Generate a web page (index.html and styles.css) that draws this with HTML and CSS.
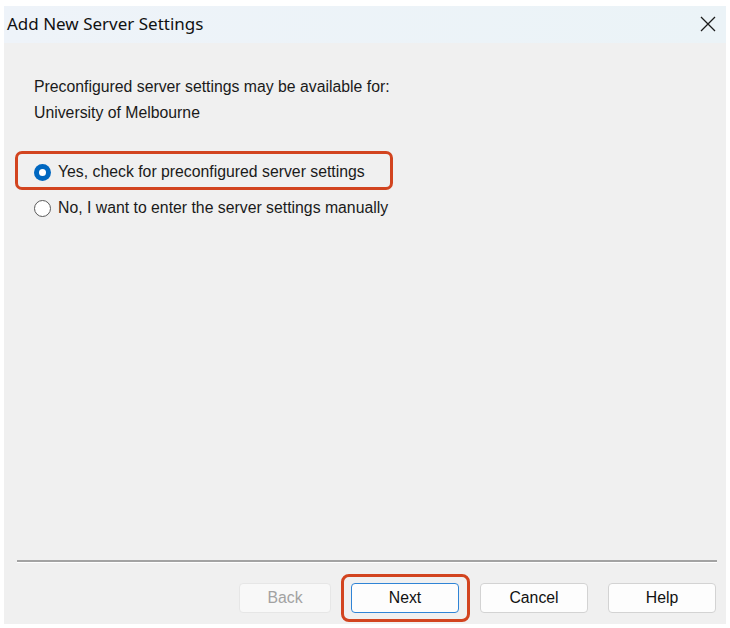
FILE: index.html
```html
<!DOCTYPE html>
<html>
<head>
<meta charset="utf-8">
<link rel="stylesheet" href="styles.css">
</head>
<body>
<div class="window">
  <div class="titlebar">
    <span class="title">Add New Server Settings</span>
    <svg class="close" width="16" height="16" viewBox="0 0 16 16"><path d="M1 1 L15 15 M15 1 L1 15" stroke="#1b1b1b" stroke-width="1.3" fill="none"/></svg>
  </div>
  <div class="content">
    <p class="line">Preconfigured server settings may be available for:</p>
    <p class="line">University of Melbourne</p>
    <div class="highlight-box">
      <label class="radio-row">
        <span class="radio checked"></span>
        <span>Yes, check for preconfigured server settings</span>
      </label>
    </div>
    <label class="radio-row second">
      <span class="radio"></span>
      <span>No, I want to enter the server settings manually</span>
    </label>
  </div>
  <div class="spacer"></div>
  <div class="separator"></div>
  <div class="buttons">
    <button class="btn back" disabled>Back</button>
    <span class="btn-highlight"><button class="btn next">Next</button></span>
    <button class="btn">Cancel</button>
    <button class="btn">Help</button>
  </div>
</div>
</body>
</html>
```

FILE: styles.css
```css
html, body {
  margin: 0;
  padding: 0;
  background: #ffffff;
}

body {
  padding: 6px 0 0 4px;
}

.window {
  width: 722px;
  height: 618px;
  background: #f0f0f0;
  display: flex;
  flex-direction: column;
  font-family: "Liberation Sans", Arial, sans-serif;
  font-size: 15.8px;
  color: #1a1a1a;
}

.titlebar {
  height: 37px;
  background: linear-gradient(to right, #eef3f9, #ebf3f7);
  display: flex;
  align-items: center;
  justify-content: space-between;
  padding: 0 10px 0 3px;
  flex: none;
}

.title {
  font-family: "Noto Sans", sans-serif;
  font-size: 17px;
  color: #111;
  position: relative;
  top: -1px;
}

.close {
  display: block;
  position: relative;
  top: -1px;
}

.content {
  padding: 31px 0 0 30px;
}

.line {
  margin: 0;
  line-height: 26px;
}

.highlight-box {
  margin: 25px 0 0 -19px;
  width: 378px;
  height: 39px;
  box-sizing: border-box;
  border: 3px solid #d2441f;
  border-radius: 7px;
  padding: 5px 0 0 16px;
}

.radio-row {
  display: flex;
  align-items: center;
  gap: 7px;
  line-height: 26px;
  height: 26px;
}

.radio-row.second {
  margin-top: 5px;
}

.radio {
  width: 17px;
  height: 17px;
  box-sizing: border-box;
  border-radius: 50%;
  border: 1px solid #5a5a5a;
  background: #ffffff;
  flex: none;
  position: relative;
}

.radio.checked {
  border: none;
  background: #0067c0;
}

.radio.checked::after {
  content: "";
  position: absolute;
  left: 5px;
  top: 5px;
  width: 7px;
  height: 7px;
  border-radius: 50%;
  background: #ffffff;
}

.spacer {
  flex: 1;
}

.separator {
  margin: 0 9px 0 13px;
  height: 2px;
  background: #a3a3a3;
  border-bottom: 1px solid #ffffff;
  flex: none;
}

.buttons {
  display: flex;
  justify-content: flex-end;
  align-items: center;
  gap: 20px;
  padding: 20px 10px 11px 0;
  flex: none;
}

.btn {
  width: 108px;
  height: 30px;
  box-sizing: border-box;
  border: 1px solid #d3d3d3;
  border-radius: 4px;
  background: #fdfdfd;
  font-family: "Liberation Sans", Arial, sans-serif;
  font-size: 15.8px;
  color: #111;
  padding: 0;
  margin: 0;
}

.btn.back {
  width: 92px;
  color: #a2a2a2;
  border-color: #e6e6e6;
  background: #f8f8f8;
}

.btn-highlight {
  display: flex;
  margin: -9px -10px -9px -10px;
  padding: 6px 8px 6px 7px;
  border: 3px solid #d2441f;
  border-radius: 8px;
}

.btn.next {
  border-color: #2f84d6;
}
```
